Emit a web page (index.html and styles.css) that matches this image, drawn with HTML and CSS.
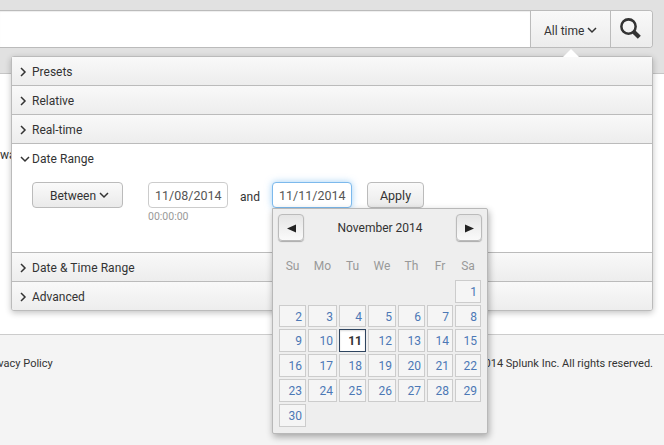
FILE: index.html
```html
<!DOCTYPE html>
<html lang="en">
<head>
<meta charset="utf-8">
<title>Search</title>
<link rel="stylesheet" href="styles.css">
</head>
<body>
<header class="search-header">
  <div class="search-bar">
    <div class="search-input"></div>
    <button class="time-button"><span>All time</span><svg class="caret" viewBox="0 0 10 7"><path d="M1 1l4 4 4-4"/></svg></button>
    <button class="go-button" aria-label="Search"><svg viewBox="0 0 20 20"><circle cx="8.1" cy="8.1" r="6.8" fill="none" stroke="#333" stroke-width="2.4"/><path d="M13 13l5.4 5.4" fill="none" stroke="#333" stroke-width="4"/></svg></button>
  </div>
</header>
<main class="content"><span>wa</span></main>
<footer class="footer"><span class="privacy">Privacy Policy</span><span>© 2005-2014 Splunk Inc. All rights reserved.</span></footer>

<section class="popup">
  <i class="popup-arrow"></i>
  <div class="row"><svg class="chevron" viewBox="0 0 7 10"><path d="M1 1l4 4-4 4"/></svg><span>Presets</span></div>
  <div class="row"><svg class="chevron" viewBox="0 0 7 10"><path d="M1 1l4 4-4 4"/></svg><span>Relative</span></div>
  <div class="row"><svg class="chevron" viewBox="0 0 7 10"><path d="M1 1l4 4-4 4"/></svg><span>Real-time</span></div>
  <div class="range">
    <div class="range-title"><svg class="caret" viewBox="0 0 10 7"><path d="M1 1l4 4 4-4"/></svg><span>Date Range</span></div>
    <div class="range-form">
      <button class="btn between"><span>Between</span><svg class="caret" viewBox="0 0 10 7"><path d="M1 1l4 4 4-4"/></svg></button>
      <div class="field"><div class="date">11/08/2014</div><small>00:00:00</small></div>
      <span class="and">and</span>
      <div class="field to">
        <div class="date focused">11/11/2014</div>
        <div class="calendar">
          <div class="cal-head">
            <button class="nav"><svg viewBox="0 0 9 9"><path d="M9 .5v8L0 4.5z"/></svg></button>
            <span>November 2014</span>
            <button class="nav"><svg viewBox="0 0 9 9"><path d="M0 .5v8l9-4z"/></svg></button>
          </div>
          <div class="weekdays"><span>Su</span><span>Mo</span><span>Tu</span><span>We</span><span>Th</span><span>Fr</span><span>Sa</span></div>
          <div class="days">
            <a class="first">1</a>
            <a>2</a><a>3</a><a>4</a><a>5</a><a>6</a><a>7</a><a>8</a>
            <a>9</a><a>10</a><a class="current">11</a><a>12</a><a>13</a><a>14</a><a>15</a>
            <a>16</a><a>17</a><a>18</a><a>19</a><a>20</a><a>21</a><a>22</a>
            <a>23</a><a>24</a><a>25</a><a>26</a><a>27</a><a>28</a><a>29</a>
            <a>30</a>
          </div>
        </div>
      </div>
      <button class="btn apply">Apply</button>
    </div>
  </div>
  <div class="row"><svg class="chevron" viewBox="0 0 7 10"><path d="M1 1l4 4-4 4"/></svg><span class="wide">Date &amp; Time Range</span></div>
  <div class="row"><svg class="chevron" viewBox="0 0 7 10"><path d="M1 1l4 4-4 4"/></svg><span>Advanced</span></div>
</section>
</body>
</html>
```
FILE: styles.css
```css
* { box-sizing: border-box; }
body {
  margin: 0;
  height: 445px;
  overflow: hidden;
  position: relative;
  display: flex;
  flex-direction: column;
  font: 12px/20px Roboto, sans-serif;
  color: #333;
  background: #fff;
}
button { font: inherit; color: inherit; margin: 0; padding: 0; }
svg { display: block; flex: none; }
.caret, .chevron { fill: none; stroke: #333; stroke-width: 1.5; }
.caret { width: 10px; height: 7px; }
.chevron { width: 7px; height: 10px; }

.search-header {
  height: 74px;
  padding: 10px 11px 0 0;
  background: #e1e1e1;
  border-bottom: 1px solid #c6c6c6;
}
.search-bar {
  display: flex;
  height: 38px;
  border: 1px solid #bbb;
  border-left: 0;
  border-radius: 0 4px 4px 0;
  background: #fff;
  overflow: hidden;
}
.search-input { flex: 1; box-shadow: inset 0 1px 1px #eee; }
.time-button, .go-button {
  display: flex;
  align-items: center;
  border: 0;
  border-left: 1px solid #bbb;
  background: linear-gradient(#f9f9f9, #ececec);
}
.time-button { width: 80px; padding: 3px 0 0 13px; gap: 3px; }
.time-button .caret { margin-top: -1px; }
.go-button { width: 42px; padding: 0 0 1px 9px; }
.go-button svg { width: 21px; height: 21px; }

.content { height: 260px; padding-top: 71px; }
.footer {
  flex: 1;
  display: flex;
  justify-content: space-between;
  padding: 19px 11px 0 0;
  border-top: 1px solid #ccc;
  background: #f4f4f4;
  font-size: 11px;
}
.privacy { margin-left: -15px; }

.popup {
  position: absolute;
  left: 11px;
  top: 56px;
  width: 642px;
  height: 255px;
  border: 1px solid #bbb;
  border-radius: 3px;
  background: #fff;
  box-shadow: 0 2px 6px rgba(0, 0, 0, .24);
}
.popup-arrow {
  position: absolute;
  left: 551px;
  top: -8px;
  width: 16px;
  height: 8px;
  background: #fff;
  clip-path: polygon(50% 0, 100% 100%, 0 100%);
}
.row {
  display: flex;
  align-items: center;
  height: 29px;
  padding: 2px 0 0 8px;
  gap: 5px;
  border-bottom: 1px solid #bbb;
  background: linear-gradient(#f9f9f9, #ededed);
}
.row:last-child { height: 28px; border: 0; border-radius: 0 0 2px 2px; }
.row .chevron { margin-top: -1px; }
.wide { letter-spacing: .07px; }
.range { height: 109px; border-bottom: 1px solid #bbb; }
.range-title { display: flex; align-items: center; height: 30px; padding-left: 8px; gap: 2px; letter-spacing: .07px; }
.range-form { display: flex; padding: 8px 0 0 20px; }
.btn {
  display: flex;
  align-items: center;
  justify-content: center;
  height: 26px;
  padding-top: 1px;
  border: 1px solid #bbb;
  border-radius: 4px;
  background: linear-gradient(#fafafa, #eaeaea);
}
.between { width: 91px; gap: 3px; padding-left: 4px; margin-right: 25px; }
.apply { width: 57px; font-size: 12.5px; }
.field { width: 80px; }
.date {
  height: 26px;
  padding-left: 6px;
  border: 1px solid #ccc;
  border-radius: 4px;
  background: #fff;
  color: #555;
  font-size: 12.5px;
  line-height: 26px;
  white-space: nowrap;
}
.focused { border-color: #7cb9ec; box-shadow: 0 0 7px rgba(82, 168, 236, .55); }
.field small { display: block; color: #999; font-size: 10.5px; line-height: 17px; }
.and { width: 44px; padding-top: 5px; text-align: center; }
.field.to { position: relative; margin-right: 15px; }
.calendar {
  position: absolute;
  left: 0;
  top: 26px;
  width: 216px;
  height: 226px;
  padding: 5px;
  border: 1px solid #b8b8b8;
  border-radius: 0 2px 2px 2px;
  background: #eee;
  box-shadow: 1px 3px 7px rgba(0, 0, 0, .32);
}
.cal-head { display: flex; justify-content: space-between; height: 28px; line-height: 28px; }
.nav {
  display: flex;
  align-items: center;
  justify-content: center;
  width: 26px;
  height: 27px;
  padding-top: 1px;
  border: 1px solid #bbb;
  border-radius: 4px;
  background: linear-gradient(#e5e5e5, #fafafa);
  box-shadow: 0 1px 1px #aaa;
}
.nav svg { width: 9px; height: 9px; fill: #222; }
.weekdays, .days {
  display: grid;
  grid-template-columns: 27px 29px 27px 28px 27px 26px 26px;
  column-gap: 2px;
  margin-left: 1px;
}
.weekdays { margin-top: 12px; height: 26px; line-height: 24px; text-align: center; color: #999; }
.days { grid-template-rows: 23px 22px repeat(4, 23px); row-gap: 2px; }
.days a {
  padding-right: 3px;
  border: 1px solid #ccc;
  background: #f5f5f5;
  color: #4c78b5;
  line-height: 23px;
  text-align: right;
}
.days .first { grid-column: 7; }
.days .current { border-color: #2f4560; background: #fff; color: #333; font-weight: 700; box-shadow: inset 0 1px 2px #ddd; }
```
